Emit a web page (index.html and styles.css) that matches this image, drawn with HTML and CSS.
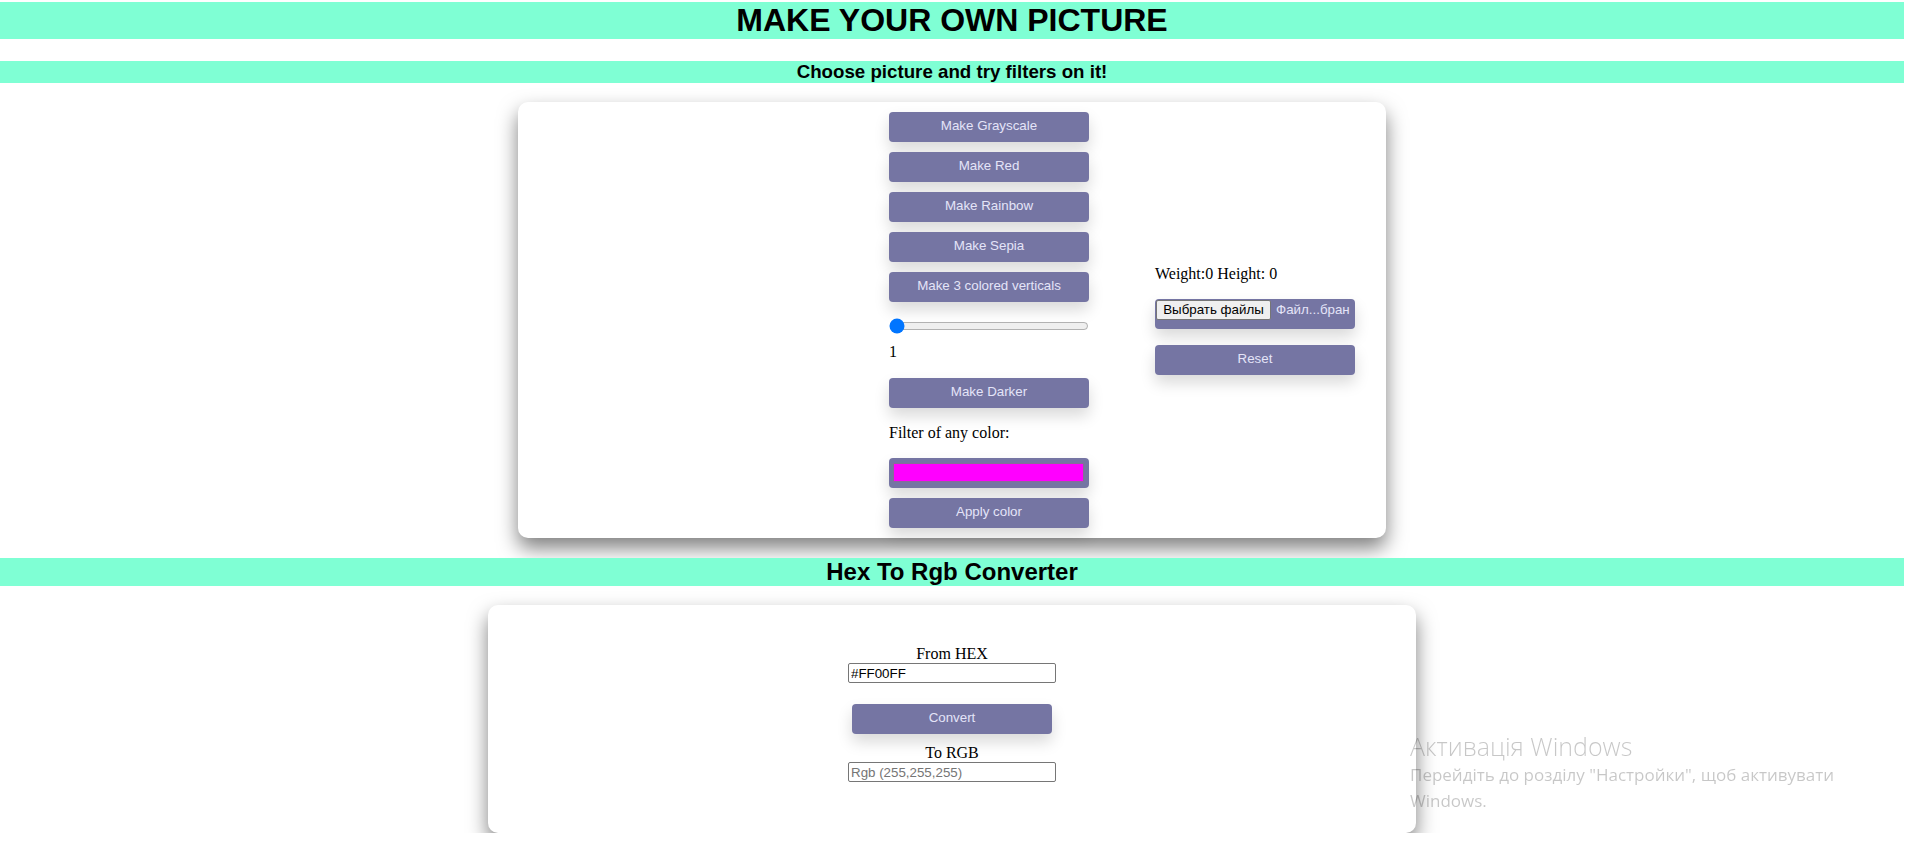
FILE: index.html
```html
<!DOCTYPE html>
<html lang="en">
<head>
<meta charset="utf-8">
<title>Make your own picture</title>
<link rel="stylesheet" href="styles.css">
</head>
<body>
  <h1 class="banner title">MAKE YOUR OWN PICTURE</h1>
  <h3 class="banner subtitle">Choose picture and try filters on it!</h3>

  <section class="card filters">
    <div class="preview"></div>
    <div class="tools">
      <button class="btn">Make Grayscale</button>
      <button class="btn">Make Red</button>
      <button class="btn">Make Rainbow</button>
      <button class="btn">Make Sepia</button>
      <button class="btn">Make 3 colored verticals</button>
      <input class="slider" type="range" min="1" max="10" value="1">
      <p class="text slider-value">1</p>
      <button class="btn darker">Make Darker</button>
      <p class="text filter-label">Filter of any color:</p>
      <div class="color-field"><div class="swatch"></div></div>
      <button class="btn">Apply color</button>
    </div>
    <div class="side">
      <p class="text">Weight:0 Height: 0</p>
      <div class="file-field">
        <span class="file-btn">Выбрать файлы</span>
        <span class="file-name">Файл...бран</span>
      </div>
      <button class="btn reset">Reset</button>
    </div>
  </section>

  <h2 class="banner section-title">Hex To Rgb Converter</h2>

  <section class="card converter">
    <label class="text conv-label" for="hex">From HEX</label>
    <input class="field" id="hex" type="text" value="#FF00FF">
    <button class="btn convert">Convert</button>
    <label class="text conv-label to" for="rgb">To RGB</label>
    <input class="field" id="rgb" type="text" placeholder="Rgb (255,255,255)">
  </section>

  <div class="watermark">
    <div class="wm-title">Активація Windows</div>
    <div class="wm-text">Перейдіть до розділу "Настройки", щоб активувати<br>Windows.</div>
  </div>
</body>
</html>
```
FILE: styles.css
```css
html, body {
  margin: 0;
  padding: 0;
  background: #fff;
}

body {
  width: 1904px;
  font-family: "Liberation Serif", "Times New Roman", serif;
  font-size: 16px;
  color: #000;
}

.banner {
  background: #7fffd4;
  text-align: center;
  font-family: "Liberation Sans", Arial, sans-serif;
  font-weight: bold;
  color: #000;
}

.title {
  font-size: 32px;
  line-height: 37px;
  margin: 2px 0 22px;
}

.subtitle {
  font-size: 18.72px;
  line-height: 22px;
  margin: 0 0 19px;
}

.section-title {
  font-size: 24px;
  line-height: 28px;
  margin: 20px 0 19px;
}

.card {
  background: #fff;
  border-radius: 10px;
  box-shadow: 0 10px 20px rgba(0, 0, 0, 0.5);
  box-sizing: border-box;
  margin: 0 auto;
}

.filters {
  width: 868px;
  padding: 10px 31px 10px 0;
  display: flex;
  align-items: center;
  gap: 66px;
}

.preview {
  width: 305px;
  flex: none;
}

.tools,
.side {
  width: 200px;
  flex: none;
  display: flex;
  flex-direction: column;
  align-items: flex-start;
}

.tools {
  gap: 10px;
}

.text {
  margin: 0;
  line-height: 18px;
  font-size: 16px;
}

.btn {
  width: 200px;
  height: 30px;
  border: none;
  border-radius: 4px;
  background: #7575a3;
  color: #e4e4f8;
  font-family: "Liberation Sans", Arial, sans-serif;
  font-size: 13.333px;
  line-height: 28px;
  box-shadow: 0 8px 15px rgba(0, 0, 0, 0.15);
  padding: 0 0 2px;
  cursor: pointer;
  flex: none;
}

.slider {
  width: 200px;
  height: 16px;
  margin: 6px 0 0;
  padding: 0;
}

.slider-value {
  margin-top: -1px;
}

.darker {
  margin-top: 7px;
}

.filter-label {
  margin-top: 6px;
}

.color-field {
  margin-top: 6px;
  width: 200px;
  height: 30px;
  box-sizing: border-box;
  padding: 5px 5px 6px 4px;
  background: #7575a3;
  border-radius: 4px;
  box-shadow: 0 8px 15px rgba(0, 0, 0, 0.15);
}

.swatch {
  height: 100%;
  background: #ff00ff;
  border: 1px solid #8a6a9a;
  box-sizing: border-box;
}

.file-field {
  margin-top: 16px;
  width: 200px;
  height: 30px;
  box-sizing: border-box;
  padding: 1px 1px 0 1px;
  background: #7575a3;
  border-radius: 4px;
  box-shadow: 0 8px 15px rgba(0, 0, 0, 0.15);
  display: flex;
  align-items: flex-start;
  gap: 5px;
  font-family: "Liberation Sans", Arial, sans-serif;
  font-size: 13.333px;
  overflow: hidden;
  white-space: nowrap;
}

.file-btn {
  width: 115px;
  height: 20px;
  box-sizing: border-box;
  flex: none;
  background: #efefef;
  border: 1px solid #767676;
  border-radius: 2px;
  color: #000;
  text-align: center;
  line-height: 18px;
}

.file-name {
  color: #e4e4f8;
  line-height: 20px;
}

.reset {
  margin-top: 16px;
}

.converter {
  width: 928px;
  padding: 40px 0 51px;
  display: flex;
  flex-direction: column;
  align-items: center;
}

.conv-label {
  display: block;
  text-align: center;
}

.conv-label.to {
  margin-top: 10px;
}

.field {
  width: 208px;
  height: 20px;
  box-sizing: border-box;
  margin: 0;
  padding: 1px 2px;
  border: 1px solid #767676;
  border-radius: 2px;
  font-family: "Liberation Sans", Arial, sans-serif;
  font-size: 13.333px;
  color: #000;
  background: #fff;
}

.field::placeholder {
  color: #757575;
}

.convert {
  margin-top: 21px;
}

.watermark {
  position: fixed;
  left: 1410px;
  top: 730px;
  color: rgba(0, 0, 0, 0.22);
  font-family: "Open Sans", "Noto Sans", sans-serif;
  pointer-events: none;
}

.wm-title {
  font-size: 25px;
  font-weight: 300;
  line-height: 32px;
}

.wm-text {
  font-size: 17px;
  line-height: 26px;
}
```
